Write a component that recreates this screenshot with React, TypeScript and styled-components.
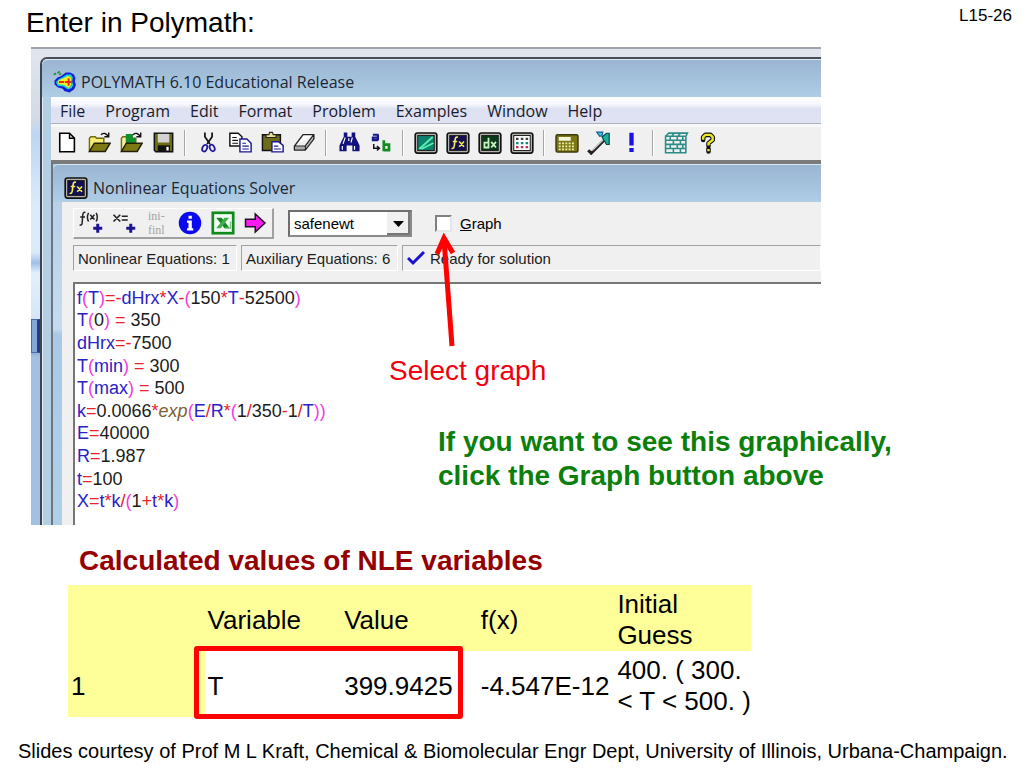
import React from "react";
import styled, { createGlobalStyle } from "styled-components";

const GlobalStyle = createGlobalStyle`
  *, *::before, *::after { box-sizing: border-box; }
  body { margin: 0; background: #fff; color: #000; font-family: "Liberation Sans", Arial, sans-serif; }
  button, select, input { font: inherit; color: inherit; margin: 0; }
`;

const uiFont = `"Open Sans", "Segoe UI", sans-serif`;

/* ---------- slide ---------- */

const Slide = styled.main`
  display: flex;
  flex-direction: column;
  min-height: 100vh;
`;

const SlideHeader = styled.header`
  display: flex;
  justify-content: space-between;
  align-items: flex-start;
  height: 47px;
  padding: 6px 12px 0 26px;
`;

const Title = styled.h1`
  margin: 0;
  font-size: 28px;
  line-height: 34px;
  font-weight: 400;
`;

const PageNumber = styled.span`
  font-size: 17px;
  line-height: 20px;
`;

const Figure = styled.section`
  position: relative;
  max-width: 790px;
  margin-left: 31px;
  border-top: 2px solid #9fa3ab;
  background: #dfe4ed;
  padding-top: 8px;
`;

const Callout = styled.p<{ $x: number; $y: number; $color: string; $bold?: boolean }>`
  position: absolute;
  left: ${(p) => p.$x}px;
  top: ${(p) => p.$y}px;
  margin: 0;
  font-size: 28px;
  line-height: 34px;
  white-space: nowrap;
  font-weight: ${(p) => (p.$bold ? 700 : 400)};
  color: ${(p) => p.$color};
`;

const Pointer = styled.svg`
  position: absolute;
  left: 400px;
  top: 182px;
`;

/* ---------- application window ---------- */

const Desktop = styled.div`
  display: grid;
  grid-template-columns: 9px minmax(0, 1fr);
  background: linear-gradient(#dfe4ed 0, #d3dbe6 60px, #bdd6f2 78px, #dcebfa 150px, #dcebfa 195px, #9fc0e6 206px, #e3effb 216px, #d5e6f8 262px, #a9c8ec 266px, #86a9d8 294px, #a3bfe2 300px, #a3bfe2 100%);
`;

const Strip = styled.div`
  padding-top: 262px;
`;

const StripButton = styled.div`
  height: 34px;
  border: 1px solid #4a6ba6;
  border-right: 3px solid #1f3f80;
  background: #86a6d6;
`;

const AppWindow = styled.div`
  border-top: 2px solid #474d57;
  border-left: 2px solid #3c444f;
  border-top-left-radius: 7px;
  padding-left: 9px;
  background: #b4cfe4;
  box-shadow: inset 1px 1px 0 #e4eff9;
`;

const TitleBar = styled.div<{ $child?: boolean }>`
  display: flex;
  align-items: center;
  gap: ${(p) => (p.$child ? 5 : 4)}px;
  height: 38px;
  margin-left: -9px;
  padding: ${(p) => (p.$child ? "8px 0 0 11px" : "7px 0 0 11px")};
  border-top-left-radius: 6px;
  border-top: 1px solid #d9e7f4;
  background: linear-gradient(#9ab5d1, #a4c1dc 50%, #b0cde6);
  font-family: ${uiFont};
  font-size: 16px;
  line-height: 22px;
  color: #1d2633;
  white-space: nowrap;
  svg { flex: none; }
`;

const MenuBar = styled.nav`
  display: flex;
  gap: 20px;
  height: 27px;
  padding: 1px 0 0 9px;
  background: linear-gradient(#fff, #f4f6fc 30%, #dde1f1 45%, #dfe3f3);
  border-bottom: 1px solid #aeb2bc;
`;

const MenuItem = styled.button`
  padding: 0;
  border: 0;
  background: none;
  font-family: ${uiFont};
  font-size: 16px;
  line-height: 24px;
  color: #1a1c2c;
`;

const ToolBar = styled.div`
  display: flex;
  align-items: center;
  height: 36px;
  padding-bottom: 2px;
  background: #f0f0f0;
  border-top: 3px solid #f8f8f8;
`;

const ToolButton = styled.button<{ $wide?: boolean }>`
  display: grid;
  place-items: center;
  flex: none;
  width: ${(p) => (p.$wide ? 33 : 32)}px;
  height: 28px;
  padding: 0;
  border: 0;
  background: none;
`;

const Separator = styled.span`
  flex: none;
  width: 2px;
  height: 26px;
  margin: 0 6px 0 5px;
  background: #a6a6a6;
  border-right: 1px solid #fff;
`;

/* ---------- solver window ---------- */

const SolverWindow = styled.div`
  border-top: 4px solid #7b7b7b;
  border-left: 2px solid #6d757e;
  padding-left: 9px;
  background: linear-gradient(#b3cde6 0, #c6dbef 165px, #a9c9e4 170px, #b1cfe7 100%);
`;

const SolverBody = styled.div`
  background: #f0f0f0;
  padding: 6px 0 0 11px;
`;

const Controls = styled.div`
  display: flex;
  align-items: center;
  height: 31px;
`;

const ButtonPanel = styled.div`
  display: flex;
  align-items: center;
  flex: none;
  height: 31px;
  margin-right: 14px;
  border: 1px solid #fff;
  border-right: 2px solid #a0a0a0;
  border-bottom: 2px solid #a0a0a0;
`;

const SelectBox = styled.div`
  position: relative;
  flex: none;
  width: 124px;
  height: 27px;
  border: 2px solid #6e6e6e;
  border-right-color: #8a8a8a;
  border-bottom-color: #8a8a8a;
  background: #fff;
`;

const Method = styled.select`
  appearance: none;
  width: 100%;
  height: 100%;
  padding: 0 24px 0 4px;
  border: 0;
  background: none;
  font-size: 15px;
`;

const DropMark = styled.svg`
  position: absolute;
  top: 0;
  right: 0;
  pointer-events: none;
`;

const GraphOption = styled.label`
  display: flex;
  align-items: center;
  gap: 8px;
  margin-left: 23px;
  font-size: 15px;
`;

const CheckBox = styled.input`
  appearance: none;
  width: 17px;
  height: 17px;
  border: 2px solid #808080;
  border-right-color: #e6e6e6;
  border-bottom-color: #e6e6e6;
  background: #fff;
`;

const StatusBar = styled.div`
  display: grid;
  grid-template-columns: 164px 157px minmax(0, 1fr);
  gap: 4px;
  margin: 6px 0 11px;
`;

const StatusCell = styled.div`
  display: flex;
  align-items: center;
  gap: 5px;
  height: 26px;
  padding-left: 4px;
  border: 1px solid #a2a2a2;
  border-right-color: #fff;
  border-bottom-color: #fff;
  font-size: 15px;
  color: #1c1c1c;
  white-space: nowrap;
`;

const Editor = styled.div`
  height: 243px;
  padding: 3px 0 0 2px;
  border-top: 2px solid #767676;
  border-left: 2px solid #767676;
  background: #fff;
`;

const CodeLines = styled.ol`
  display: flex;
  flex-direction: column;
  height: 226px;
  margin: 0;
  padding: 0;
  list-style: none;
  font-size: 18px;
`;

const CodeLine = styled.li`
  display: flex;
  align-items: center;
  flex: 1;
  white-space: pre;
`;

const tokenColors = { id: "#2a22c8", op: "#e8202c", par: "#f03ce0", num: "#1c1c1c", fn: "#806030" };
type TokenKind = keyof typeof tokenColors;

const Token = styled.span<{ $kind: TokenKind }>`
  color: ${(p) => tokenColors[p.$kind]};
  font-style: ${(p) => (p.$kind === "fn" ? "italic" : "normal")};
`;

/* ---------- results ---------- */

const ResultsTitle = styled.h2`
  margin: 0;
  padding: 19px 0 7px 79px;
  font-size: 28px;
  line-height: 34px;
  color: #940000;
`;

const Results = styled.div`
  position: relative;
  max-width: 683px;
  margin-left: 68px;
`;

const Table = styled.table`
  width: 100%;
  table-layout: fixed;
  border-collapse: collapse;
  font-size: 26px;
  line-height: 31px;
`;

const cell = `
  height: 66px;
  padding: 4px 0 0 3px;
  text-align: left;
  font-weight: 400;
`;

const HeadCell = styled.th`
  ${cell}
  background: #ffff99;
`;

const Cell = styled.td`
  ${cell}
`;

const Highlight = styled.div`
  position: absolute;
  left: 126px;
  top: 61px;
  width: 269px;
  height: 73px;
  border: 5px solid #f00;
  border-radius: 3px;
`;

const Footer = styled.footer`
  padding: 22px 0 5px 18px;
  font-size: 20px;
  line-height: 24px;
`;

/* ---------- icons ---------- */

const Svg = ({ children, size = 23 }: { children: React.ReactNode; size?: number }) => (
  <svg width={size} height={size} viewBox="0 0 16 16" fill="none" aria-hidden="true">
    {children}
  </svg>
);

const LogoIcon = () => (
  <Svg size={24}>
    <path d="M.5 3.200l1.500-1M3 2l1.500-1M4 3l1.500-.5" stroke="#2a8c3c" strokeWidth="1.200" />
    <path d="M5.500 4l3-2.300h3L14 3l1 2.500-.5 2 .8 2.500-1.300 3-3 2-3.500-1-1-1.500-3.500-1L1 9.500 1 7l2-2z" fill="#1420d8" />
    <path d="M6 5l3-2h3l1.200 2-.4 2.500.7 2.500-1 2-2.500 1-3-2-4-.5L2 8l2-2z" fill="#1cd0c8" />
    <path d="M7 5.500L10 4l2 1v5l-1.500 2L7.500 10 3.500 9.300V7z" fill="#f8f020" />
    <path d="M4 8h3.500M8 8h4.500M10.400 5.500v5" stroke="#f02818" strokeWidth="1.300" />
  </Svg>
);

const NewIcon = () => (
  <Svg><path d="M2.600 1.600h6.800l3.400 3.400v9.400H2.600z" fill="#fff" stroke="#000" strokeWidth="1.100" /><path d="M9.400 1.600V5h3.400" stroke="#000" /></Svg>
);

const OpenIcon = ({ green = false }: { green?: boolean }) => (
  <Svg>
    <path d="M1 14V5l1-1h3l1 1h5v3" fill={green ? "#f4f0a0" : "#f6ee70"} stroke="#6e6a10" />
    {green && <path d="M4 2h5v3h2v4H5l-1 2z" fill="#109030" />}
    <path d="M1 14.200l3.400-5.700h11L12 14.200z" fill="#7d7a14" stroke="#222000" />
    <path d="M9 2.600c2-1.600 3.600-1 4.800.8M14.400 1v3h-3" stroke="#111" />
  </Svg>
);

const SaveIcon = () => (
  <Svg>
    <path d="M1.600 1.600h12.800v12.800H2.600l-1-1z" fill="#6e6c10" stroke="#111" />
    <path d="M4 2h8v6H4z" fill="#d2d2d2" />
    <path d="M4 10h8.500v4H4z" fill="#111" />
    <path d="M10 11h1.600v2.600H10z" fill="#fff" />
  </Svg>
);

const CutIcon = () => (
  <Svg>
    <path d="M5.500 1v3l3.500 5M10.500 1v3L7 9" stroke="#111" strokeWidth="1.200" />
    <ellipse cx="5.300" cy="11.800" rx="1.600" ry="2.400" transform="rotate(25 5 12)" stroke="#2018a0" strokeWidth="1.200" />
    <ellipse cx="10.700" cy="11.600" rx="1.600" ry="2.400" transform="rotate(-25 11 12)" stroke="#2018a0" strokeWidth="1.200" />
  </Svg>
);

const CopyIcon = () => (
  <Svg>
    <path d="M.6 1.600h5.800L9 4v6.400H.6z" fill="#fff" stroke="#111" />
    <path d="M2.300 4.500h3M2.300 6.500h4M2.300 8.500h4" stroke="#111" strokeWidth=".8" />
    <path d="M7.600 5.600h4.800L15.400 8.500v6H7.600z" fill="#fff" stroke="#1c1890" />
    <path d="M9.300 8.500h2.500M9.300 10.500h4.500M9.300 12.500h4.500" stroke="#1c1890" strokeWidth=".8" />
  </Svg>
);

const PasteIcon = () => (
  <Svg>
    <path d="M1 2.600h12.500v11H1z" fill="#6e6c18" stroke="#111" />
    <path d="M3.500 4.500V2.500h2L6 1h2l.5 1.500h2v2z" fill="#e8e090" stroke="#222" strokeWidth=".8" />
    <path d="M7.600 7.500h4.500L15.400 10v4.500H7.600z" fill="#fff" stroke="#1c1890" />
    <path d="M9 10.500h3M9 12.500h4.800" stroke="#1c1890" strokeWidth=".8" />
  </Svg>
);

const EraserIcon = () => (
  <Svg>
    <path d="M1 10.500L7 2.500h7.500L8.500 10.500zM8.500 10.500v2.700M1 10.500v2.700h7.500l6-7.700v-3" fill="#fff" stroke="#222" strokeLinejoin="round" />
    <path d="M1.500 11h6.500v1.700H1.500zM9 10.700l5-6.700v1.500l-5 6.500z" fill="#aaa" />
  </Svg>
);

const FindIcon = () => (
  <Svg>
    <path d="M4 1h2.500v3H9.500V1H12v3l1.500 3 1.500 3v4h-5v-4H6v4H1v-4l1.500-3L4 4z" fill="#12127e" />
    <path d="M5 4.500L3.500 9M10 4.500L9 8M3 10.500v2.500M11.500 10.500v2.500M7.500 5v2" stroke="#fff" strokeWidth=".8" />
  </Svg>
);

const ReplaceIcon = () => (
  <Svg>
    <path d="M2 2.600h4M5.500 2.600v4M5.500 6.400H2V4.600h3" stroke="#17178c" strokeWidth="1.500" />
    <path d="M2.600 9v3h3.500M4.800 10.400L6.600 12l-1.800 1.600" stroke="#111" />
    <path d="M9.600 6.500V14M9.600 9.500h3.600v3.800H9.600" stroke="#128c22" strokeWidth="1.900" />
  </Svg>
);

const Screen = ({ fill, children }: { fill: string; children: React.ReactNode }) => (
  <Svg size={24}>
    <rect x=".8" y="1.300" width="14.400" height="13.400" rx="1.500" fill="#b9b9b2" stroke="#111" strokeWidth="1.100" />
    <rect x="2.500" y="3" width="11" height="10" fill={fill} stroke="#222" strokeWidth=".7" />
    {children}
  </Svg>
);

const PlotIcon = () => (
  <Screen fill="#0d806e"><path d="M3.500 12L12.500 4M5 12l8-4" stroke="#58f0b0" strokeWidth="1.200" /></Screen>
);
const FxIcon = () => (
  <Screen fill="#141050">
    <path d="M8 4.200c-1.500-.4-1.800.3-2 2L5.500 10c-.2 1.400-.8 1.800-1.800 1.500M4.500 7h3M8.800 7l3.200 3.500M12 7l-3.200 3.500" stroke="#f4ec50" strokeWidth="1.100" />
  </Screen>
);
const DxIcon = () => (
  <Screen fill="#0a3a1a">
    <path d="M7 4.500V11H4.300V7.700H7M8.800 7.300L12 11M12 7.300L8.800 11" stroke="#c8f4c0" strokeWidth="1.200" />
  </Screen>
);
const GridIcon = () => (
  <Screen fill="#fff">
    <path d="M4 5.300h8.500" stroke="#444" strokeWidth="1.500" strokeDasharray="1.700 1.500" />
    <path d="M4 8h8.500" stroke="#168a7a" strokeWidth="1.500" strokeDasharray="1.700 1.500" />
    <path d="M4 10.700h8.500" stroke="#c03060" strokeWidth="1.500" strokeDasharray="1.700 1.500" />
  </Screen>
);

const CalcIcon = () => (
  <Svg size={24}>
    <rect x=".7" y="2.500" width="14.600" height="11.500" rx="1" fill="#7c7816" stroke="#3c3a08" />
    <path d="M2.500 4h8v2.500h-8z" fill="#f4f4d8" />
    <path d="M2.500 8.300h11M2.500 10.300h11M2.500 12.200h11" stroke="#f0eca0" strokeWidth="1.200" strokeDasharray="1.300 .9" />
  </Svg>
);

const ToolsIcon = () => (
  <Svg size={24}>
    <path d="M.8 12.800l2 2L11.500 6" stroke="#222" strokeWidth="2" />
    <path d="M3.500 13L11.500 5.200" stroke="#c8c8c8" strokeWidth=".9" />
    <path d="M6.500.8h4l-.5 2.400-1.500.3z" fill="#38c8f0" stroke="#145e90" strokeWidth=".8" />
    <path d="M10 4l3-2.500h1.800V9H13z" fill="#18b09a" stroke="#0c4848" strokeWidth=".8" />
  </Svg>
);

const BangIcon = () => (
  <Svg><path d="M6.500 1.200h3V10h-3zM6.500 11.800h3v2.800h-3z" fill="#1c10e8" /></Svg>
);

const WallIcon = () => (
  <Svg size={25}>
    <path d="M1 4l2-2h12l-1 2M1 4h13v10.500H1zM1 6.600h13M1 9.200h13M1 11.800h13M5 4l1.500-2M9 4l1.500-2M4 4v2.600M8.500 4v2.600M12 4v2.600M6 6.600v2.600M10.500 6.600v2.600M4 9.200v2.600M8.500 9.200v2.600M12 9.200v2.600M6 11.800v2.700M10.500 11.800v2.700" stroke="#2c8c86" />
  </Svg>
);

const HelpIcon = () => (
  <Svg>
    <path d="M4.300 6.200V4.200L5.800 2.700h3.600l1.500 1.500v2L8 8.500v1.700M8 12.200v2" stroke="#111" strokeWidth="3.200" strokeLinecap="round" strokeLinejoin="round" />
    <path d="M4.300 6V4.200l1.500-1.500h3.600l1.500 1.500v2L8 8.500v1.500M8 12.500v1.500" stroke="#ece428" strokeWidth="1.700" />
  </Svg>
);

const Plus = () => <path d="M12.500 8.500v6M9.500 11.500h6" stroke="#1c1490" strokeWidth="2" />;

const AddFunctionIcon = () => (
  <Svg size={24}>
    <path d="M4.300 1C2.900.6 2.700 1.400 2.500 2.800L2.100 8c-.1 1.200-.7 1.600-1.700 1.300M.8 4h3.200M6.400 1.200C5.400 3 5.400 5.200 6.400 7M11.400 1.200c1 1.800 1 4 0 5.800M7.500 2.500l2.800 3.200M10.300 2.500L7.500 5.700" stroke="#222" />
    <Plus />
  </Svg>
);
const AddVariableIcon = () => (
  <Svg size={24}>
    <path d="M1 2.500l4.500 4.500M5.500 2.500L1 7M6.500 3.500h4M6.500 6h4" stroke="#222" strokeWidth="1.100" />
    <Plus />
  </Svg>
);
const InitialFinalIcon = () => (
  <svg width="26" height="28" viewBox="0 0 26 28" fill="#a4a4a4" fontFamily="Liberation Serif, serif" fontSize="12" aria-hidden="true">
    <text x="4" y="11">ini-</text>
    <text x="4" y="25">finl</text>
  </svg>
);
const InfoIcon = () => (
  <Svg size={24}>
    <circle cx="8" cy="8" r="7.500" fill="#0a0af0" />
    <path d="M7 3.200h2.200v1.900H7zM6 6.300h3.200v5.200h1V13H6v-1.500h1V7.800H6z" fill="#fff" />
  </Svg>
);
const ExcelIcon = () => (
  <Svg size={24}>
    <rect x="1.200" y="1.200" width="13.600" height="13.600" fill="#f4fbf4" stroke="#0f8a1c" strokeWidth="1.800" />
    <path d="M3.500 4.500h3.500l5.500 7H9z" fill="#0f8a1c" />
    <path d="M12 4.500h-3L3.500 11.500h3z" fill="#3fae4a" />
    <path d="M9.500 11.500h3.500V7" stroke="#7cc884" />
  </Svg>
);
const RunIcon = () => (
  <Svg size={24}><path d="M1 5.500h6.500V2l6.500 6-6.500 6v-3.500H1z" fill="#f81cf0" stroke="#241024" /></Svg>
);

/* ---------- data ---------- */

const menus = ["File", "Program", "Edit", "Format", "Problem", "Examples", "Window", "Help"];

const toolGroups: [string, React.ReactNode][][] = [
  [["New", <NewIcon />], ["Open", <OpenIcon />], ["Open example", <OpenIcon green />], ["Save", <SaveIcon />]],
  [["Cut", <CutIcon />], ["Copy", <CopyIcon />], ["Paste", <PasteIcon />], ["Erase", <EraserIcon />]],
  [["Find", <FindIcon />], ["Replace", <ReplaceIcon />]],
  [["Regression", <PlotIcon />], ["Nonlinear equations", <FxIcon />], ["Differential equations", <DxIcon />], ["Linear equations", <GridIcon />]],
  [["Calculator", <CalcIcon />], ["Settings", <ToolsIcon />], ["Constants", <BangIcon />]],
  [["Units", <WallIcon />], ["Help", <HelpIcon />]],
];

const solverTools: [string, React.ReactNode][] = [
  ["Add equation", <AddFunctionIcon />],
  ["Add variable", <AddVariableIcon />],
  ["Initial and final values", <InitialFinalIcon />],
  ["Information", <InfoIcon />],
  ["Export to Excel", <ExcelIcon />],
  ["Solve", <RunIcon />],
];

const program = [
  "f(T)=-dHrx*X-(150*T-52500)",
  "T(0) = 350",
  "dHrx=-7500",
  "T(min) = 300",
  "T(max) = 500",
  "k=0.0066*exp(E/R*(1/350-1/T))",
  "E=40000",
  "R=1.987",
  "t=100",
  "X=t*k/(1+t*k)",
];

const kindOf = (text: string): TokenKind => {
  if (text === "exp") return "fn";
  if (/^[A-Za-z]/.test(text)) return "id";
  if (/^[()]/.test(text)) return "par";
  if (/^[\d.]/.test(text)) return "num";
  return "op";
};

const highlight = (line: string) =>
  (line.match(/[A-Za-z]+|[\d.]+|[()]|[^A-Za-z\d.()]+/g) ?? []).map((text, i) => (
    <Token key={i} $kind={kindOf(text)}>{text}</Token>
  ));

export default function App() {
  return (
    <>
      <GlobalStyle />
      <Slide>
        <SlideHeader>
          <Title>Enter in Polymath:</Title>
          <PageNumber>L15-26</PageNumber>
        </SlideHeader>

        <Figure>
          <Desktop>
            <Strip><StripButton /></Strip>
            <AppWindow>
              <TitleBar><LogoIcon />POLYMATH 6.10 Educational Release</TitleBar>
              <MenuBar>
                {menus.map((m) => <MenuItem key={m}>{m}</MenuItem>)}
              </MenuBar>
              <ToolBar>
                {toolGroups.map((group, i) => (
                  <React.Fragment key={i}>
                    {i > 0 && <Separator />}
                    {group.map(([name, icon]) => (
                      <ToolButton key={name} aria-label={name}>{icon}</ToolButton>
                    ))}
                  </React.Fragment>
                ))}
              </ToolBar>
              <SolverWindow>
                <TitleBar $child><FxIcon />Nonlinear Equations Solver</TitleBar>
                <SolverBody>
                  <Controls>
                    <ButtonPanel>
                      {solverTools.map(([name, icon]) => (
                        <ToolButton key={name} $wide aria-label={name}>{icon}</ToolButton>
                      ))}
                    </ButtonPanel>
                    <SelectBox>
                      <Method aria-label="Solution method" defaultValue="safenewt">
                        <option>safenewt</option>
                      </Method>
                      <DropMark width="23" height="23" aria-hidden="true">
                        <path d="M0 0h23v23H0z" fill="#f0f0f0" />
                        <path d="M22 0v22H0" fill="none" stroke="#777" strokeWidth="2" />
                        <path d="M6 9h11l-5.500 6z" fill="#000" />
                      </DropMark>
                    </SelectBox>
                    <GraphOption>
                      <CheckBox type="checkbox" />
                      <span><u>G</u>raph</span>
                    </GraphOption>
                  </Controls>
                  <StatusBar>
                    <StatusCell>Nonlinear Equations: 1</StatusCell>
                    <StatusCell>Auxiliary Equations: 6</StatusCell>
                    <StatusCell>
                      <svg width="18" height="16" fill="none" aria-hidden="true">
                        <path d="M1 8l5 5L17 2" stroke="#1a12d0" strokeWidth="3" />
                      </svg>
                      Ready for solution
                    </StatusCell>
                  </StatusBar>
                  <Editor>
                    <CodeLines>
                      {program.map((line) => <CodeLine key={line}>{highlight(line)}</CodeLine>)}
                    </CodeLines>
                  </Editor>
                </SolverBody>
              </SolverWindow>
            </AppWindow>
          </Desktop>

          <Pointer width="34" height="120" fill="none" stroke="#f00" strokeWidth="5" aria-hidden="true">
            <path d="M21 115L13 8M6 23l7-16 9 15" />
          </Pointer>
          <Callout $x={358} $y={305} $color="#f00010">Select graph</Callout>
          <Callout $x={407} $y={376} $color="#0a800a" $bold>
            If you want to see this graphically,<br />click the Graph button above
          </Callout>
        </Figure>

        <ResultsTitle>Calculated values of NLE variables</ResultsTitle>
        <Results>
          <Table>
            <thead>
              <tr>
                <HeadCell />
                <HeadCell scope="col">Variable</HeadCell>
                <HeadCell scope="col">Value</HeadCell>
                <HeadCell scope="col">f(x)</HeadCell>
                <HeadCell scope="col">Initial Guess</HeadCell>
              </tr>
            </thead>
            <tbody>
              <tr>
                <HeadCell scope="row">1</HeadCell>
                <Cell>T</Cell>
                <Cell>399.9425</Cell>
                <Cell>-4.547E-12</Cell>
                <Cell>400. ( 300. &lt; T &lt; 500. )</Cell>
              </tr>
            </tbody>
          </Table>
          <Highlight />
        </Results>

        <Footer>
          Slides courtesy of Prof M L Kraft, Chemical &amp; Biomolecular Engr Dept, University of Illinois, Urbana-Champaign.
        </Footer>
      </Slide>
    </>
  );
}
